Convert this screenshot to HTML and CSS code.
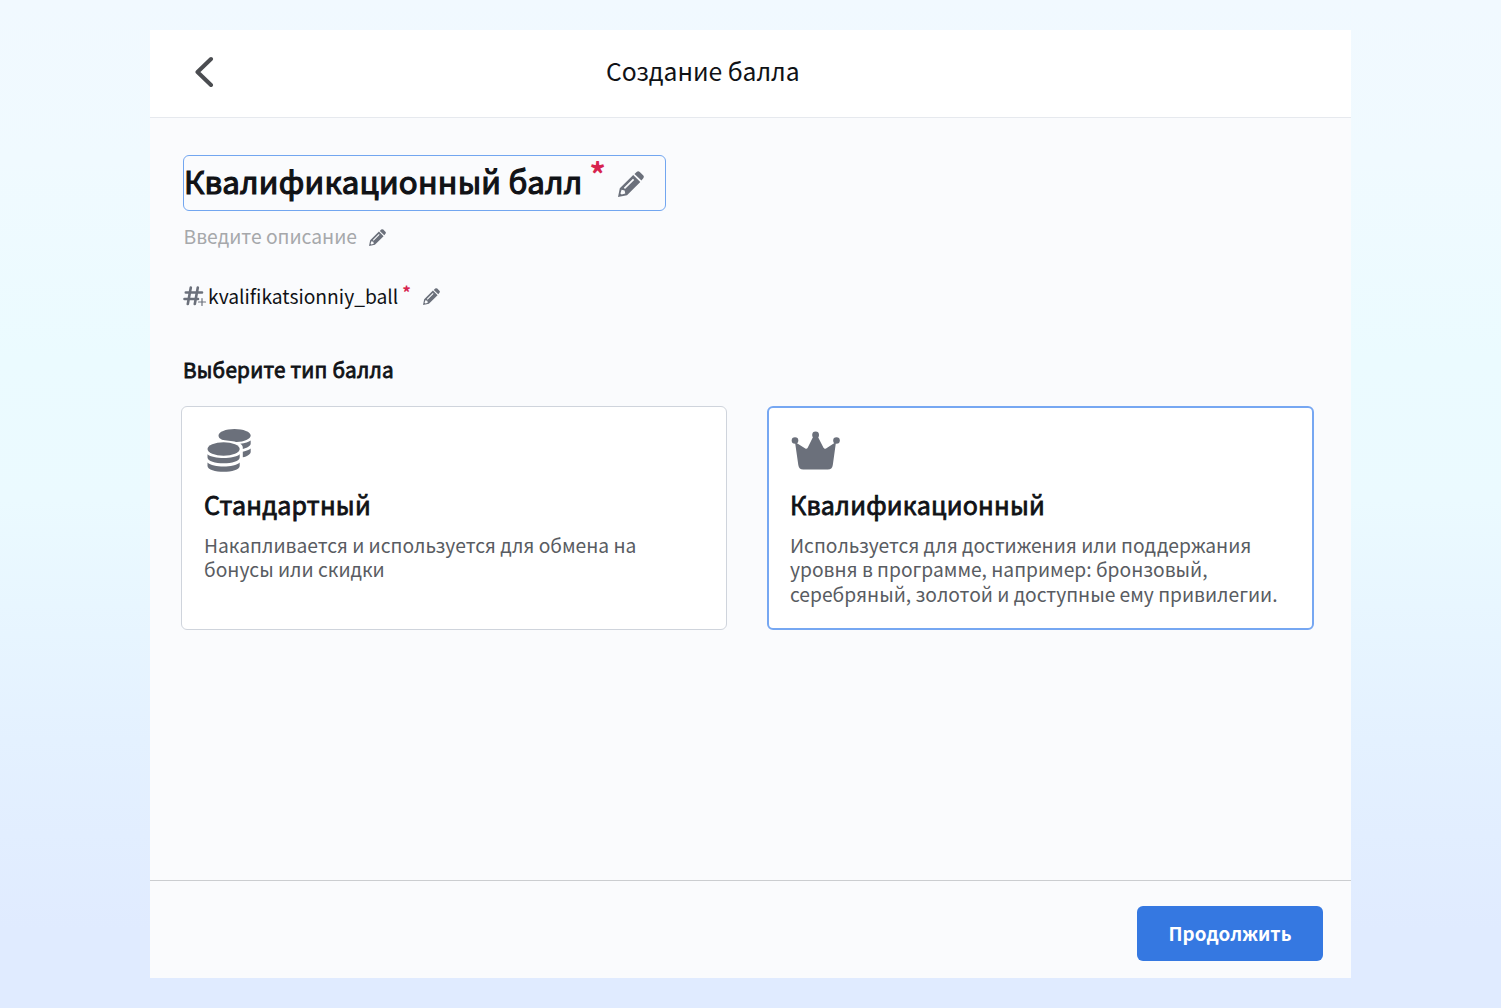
FILE: index.html
```html
<!DOCTYPE html>
<html lang="ru">
<head>
    <meta charset="UTF-8">
    <meta name="viewport" content="width=device-width, initial-scale=1.0">
    <title>Создание балла</title>
    <link rel="stylesheet" href="styles.css">
</head>
<body>

    <!-- Pencil icon shared by the editable fields -->
    <svg class="sprite" aria-hidden="true">
        <symbol id="pencil" viewBox="0 0 26 26">
            <path fill-rule="evenodd" d="M0 26 L1.8 17.2 L15.2 4 L22.3 11.1 L9 24.2 Z M3.6 18.8 L2.4 22.4 L3.7 23.6 L7.3 22.5 L6.6 19.6 Z M5.8 16.8 L7 18 L16.2 8.9 L15 7.7 Z"/>
            <path d="M16.5 2.9 L18.6.9 Q20.2-.4 21.8.9 L25.1 4.2 Q26.6 5.8 25.1 7.4 L23.4 9.6 Z"/>
        </symbol>
    </svg>

    <main class="panel">
        <header class="header">
            <button class="back" aria-label="Назад">
                <svg viewBox="0 0 20 32"><path d="M16 3 L2.5 16 L16 29"/></svg>
            </button>
            <h1>Создание балла</h1>
        </header>

        <section class="content">
            <div class="name-field">
                <span class="name">Квалификационный балл</span>
                <span class="required">*</span>
                <svg class="pencil"><use href="#pencil"/></svg>
            </div>

            <div class="description">
                <span class="placeholder">Введите описание</span>
                <svg class="pencil"><use href="#pencil"/></svg>
            </div>

            <div class="code">
                <svg class="hash" viewBox="0 0 24 20">
                    <path class="hash-main" d="M7.8 1.5 L4.8 18 M14.8 1.5 L11.8 18 M2.8 6.5 H19 M1.5 13 H15"/>
                    <path class="hash-plus" d="M15.5 16 H22.5 M19 12.5 V19.5"/>
                </svg>
                <span class="code-text">kvalifikatsionniy_ball</span>
                <span class="required">*</span>
                <svg class="pencil"><use href="#pencil"/></svg>
            </div>

            <h2>Выберите тип балла</h2>

            <div class="cards">
                <article class="card">
                    <svg class="card-icon" viewBox="0 0 50 50">
                        <path d="M11.5 10.5 C11.5 6.9 18.7 4 27.5 4 S43.7 6.9 43.7 10.5 S36.5 17.2 29 17 C25.5 15.6 18 15.4 15 14.7 C12.7 13.6 11.5 12.4 11.5 10.5 Z"/>
                        <path d="M33.2 18.7 C38 18.2 41.9 17 43.7 15.5 V18.5 C43.7 21 40 23 35.8 24 V22.5 C35.8 21 35 19.7 33.2 18.7 Z"/>
                        <path d="M35.8 26.7 C39.5 25.8 42.2 24.8 43.7 23.4 V26.7 C43.7 29.3 40.5 31.2 35.8 32.3 Z"/>
                        <ellipse cx="16.6" cy="24" rx="16.1" ry="6.7"/>
                        <path d="M.5 29.2 C6 34.2 27.2 34.2 32.7 29.2 V32.5 C32.7 40.2 .5 40.2 .5 32.5 Z"/>
                        <path d="M.5 37.5 C6 42.8 27.2 42.8 32.7 37.5 V41 C32.7 48.7 .5 48.7 .5 41 Z"/>
                    </svg>
                    <h3>Стандартный</h3>
                    <p>Накапливается и используется для обмена на<br>бонусы или скидки</p>
                </article>

                <article class="card selected">
                    <svg class="card-icon" viewBox="0 0 50 50">
                        <path d="M4 17 L14.3 23.5 Q15.8 24.3 16.7 22.7 L22.5 11 H26.5 L32.5 22.7 Q33.4 24.3 35 23.5 L45 17 L41.8 40 Q41.2 44.5 36.8 44.5 H12.2 Q8 44.5 7.3 40 Z"/>
                        <circle cx="4" cy="15.5" r="3.3"/>
                        <circle cx="24.6" cy="10" r="3.4"/>
                        <circle cx="45.5" cy="15.5" r="3.3"/>
                    </svg>
                    <h3>Квалификационный</h3>
                    <p>Используется для достижения или поддержания<br>уровня в программе, например: бронзовый,<br>серебряный, золотой и доступные ему привилегии.</p>
                </article>
            </div>
        </section>

        <footer class="footer">
            <button class="submit">Продолжить</button>
        </footer>
    </main>

</body>
</html>
```
FILE: styles.css
```css
* {
    box-sizing: border-box;
}

body {
    margin: 0;
    height: 1008px;
    padding: 30px 150px;
    font-family: 'Noto Sans CJK SC', 'Noto Sans', sans-serif;
    color: #101216;
    background: linear-gradient(#f1f9ff 0, #f0faff 160px, #ebfbff 360px, #ebfaff 500px, #e4f1ff 740px, #e0ebff 930px);
}

h1, h2, h3, p {
    margin: 0;
}

button {
    border: 0;
    padding: 0;
    font-family: inherit;
    cursor: pointer;
}

.sprite {
    display: none;
}

.panel {
    display: flex;
    flex-direction: column;
    width: 1201px;
    height: 948px;
    background: #fafbfd;
}

.header {
    display: flex;
    align-items: center;
    height: 88px;
    padding: 0 0 3px 45px;
    background: #fff;
    border-bottom: 1px solid #e6e9ee;
}

.back {
    width: 20px;
    height: 32px;
    background: none;
}

.back svg {
    display: block;
    width: 20px;
    height: 32px;
    fill: none;
    stroke: #4b4d51;
    stroke-width: 4;
    stroke-linecap: round;
    stroke-linejoin: round;
}

h1 {
    margin: -4px 0 0 391px;
    font-size: 24.7px;
    font-weight: 400;
    line-height: 32px;
}

.content {
    flex: 1;
    padding: 37px 31px 0;
}

.pencil {
    fill: #6b707b;
    overflow: visible;
}

.required {
    color: #d7244f;
    font-weight: 700;
}

/* Semi-bold look: regular weight with a thin outline */
.name,
h2,
h3 {
    font-weight: 400;
    letter-spacing: 0.22px;
    -webkit-text-stroke: 0.8px currentColor;
}

.name-field {
    display: flex;
    align-items: center;
    width: 483px;
    height: 56px;
    margin-left: 2px;
    border: 1px solid #72a6f0;
    border-radius: 6px;
}

.name {
    margin-top: -4px;
    font-size: 31.2px;
    line-height: 50px;
    white-space: nowrap;
    -webkit-text-stroke-width: 1.2px;
}

.name-field .required {
    margin: -21px 0 0 7px;
    font-size: 32px;
    line-height: 40px;
}

.name-field .pencil {
    width: 26px;
    height: 26px;
    margin: 2px 0 0 12px;
}

.description {
    display: flex;
    align-items: center;
    height: 30px;
    margin: 10px 0 0 2px;
}

.placeholder {
    margin-left: 0.5px;
    color: #a6a8ab;
    font-size: 19.25px;
}

.description .pencil,
.code .pencil {
    width: 17px;
    height: 17px;
    margin: 1px 0 0 12px;
}

.description .pencil {
    margin-top: 3px;
}

.code {
    display: flex;
    align-items: center;
    height: 30px;
    margin: 30px 0 0 2px;
}

.hash {
    width: 24px;
    height: 20px;
    fill: none;
    stroke: #6b707b;
    stroke-linecap: round;
}

.hash-main {
    stroke-width: 2.6;
}

.hash-plus {
    stroke-width: 1.2;
}

.code-text {
    margin-left: 1px;
    font-size: 19.25px;
}

.code .required {
    margin: -10px 0 0 4px;
    font-size: 17px;
}

h2 {
    margin: 42px 0 0 2px;
    font-size: 20.7px;
    line-height: 32px;
}

.cards {
    display: grid;
    grid-template-columns: 546px 547px;
    gap: 40px;
    margin-top: 21px;
}

.card {
    height: 224px;
    padding: 18px 22px 0;
    background: #fff;
    border: 1px solid #cfd4dc;
    border-radius: 6px;
}

.card.selected {
    padding: 17px 21px 0;
    border: 2px solid #76a7f2;
}

.card-icon {
    display: block;
    width: 50px;
    height: 50px;
    margin-left: 3px;
    fill: #6b707b;
}

.selected .card-icon {
    margin-left: 1px;
}

h3 {
    margin-top: 12px;
    font-size: 25px;
    line-height: 34px;
}

.card p {
    margin-top: 11.5px;
    color: #595c62;
    font-size: 19.23px;
    line-height: 24.5px;
    white-space: nowrap;
}

.footer {
    display: flex;
    justify-content: flex-end;
    height: 98px;
    padding: 25px 28px 0 0;
    border-top: 1px solid #cbcdd0;
}

.submit {
    width: 186px;
    height: 55px;
    padding-bottom: 2px;
    color: #fff;
    background: #3578e1;
    border-radius: 6px;
    font-size: 18.8px;
    font-weight: 700;
}
```
